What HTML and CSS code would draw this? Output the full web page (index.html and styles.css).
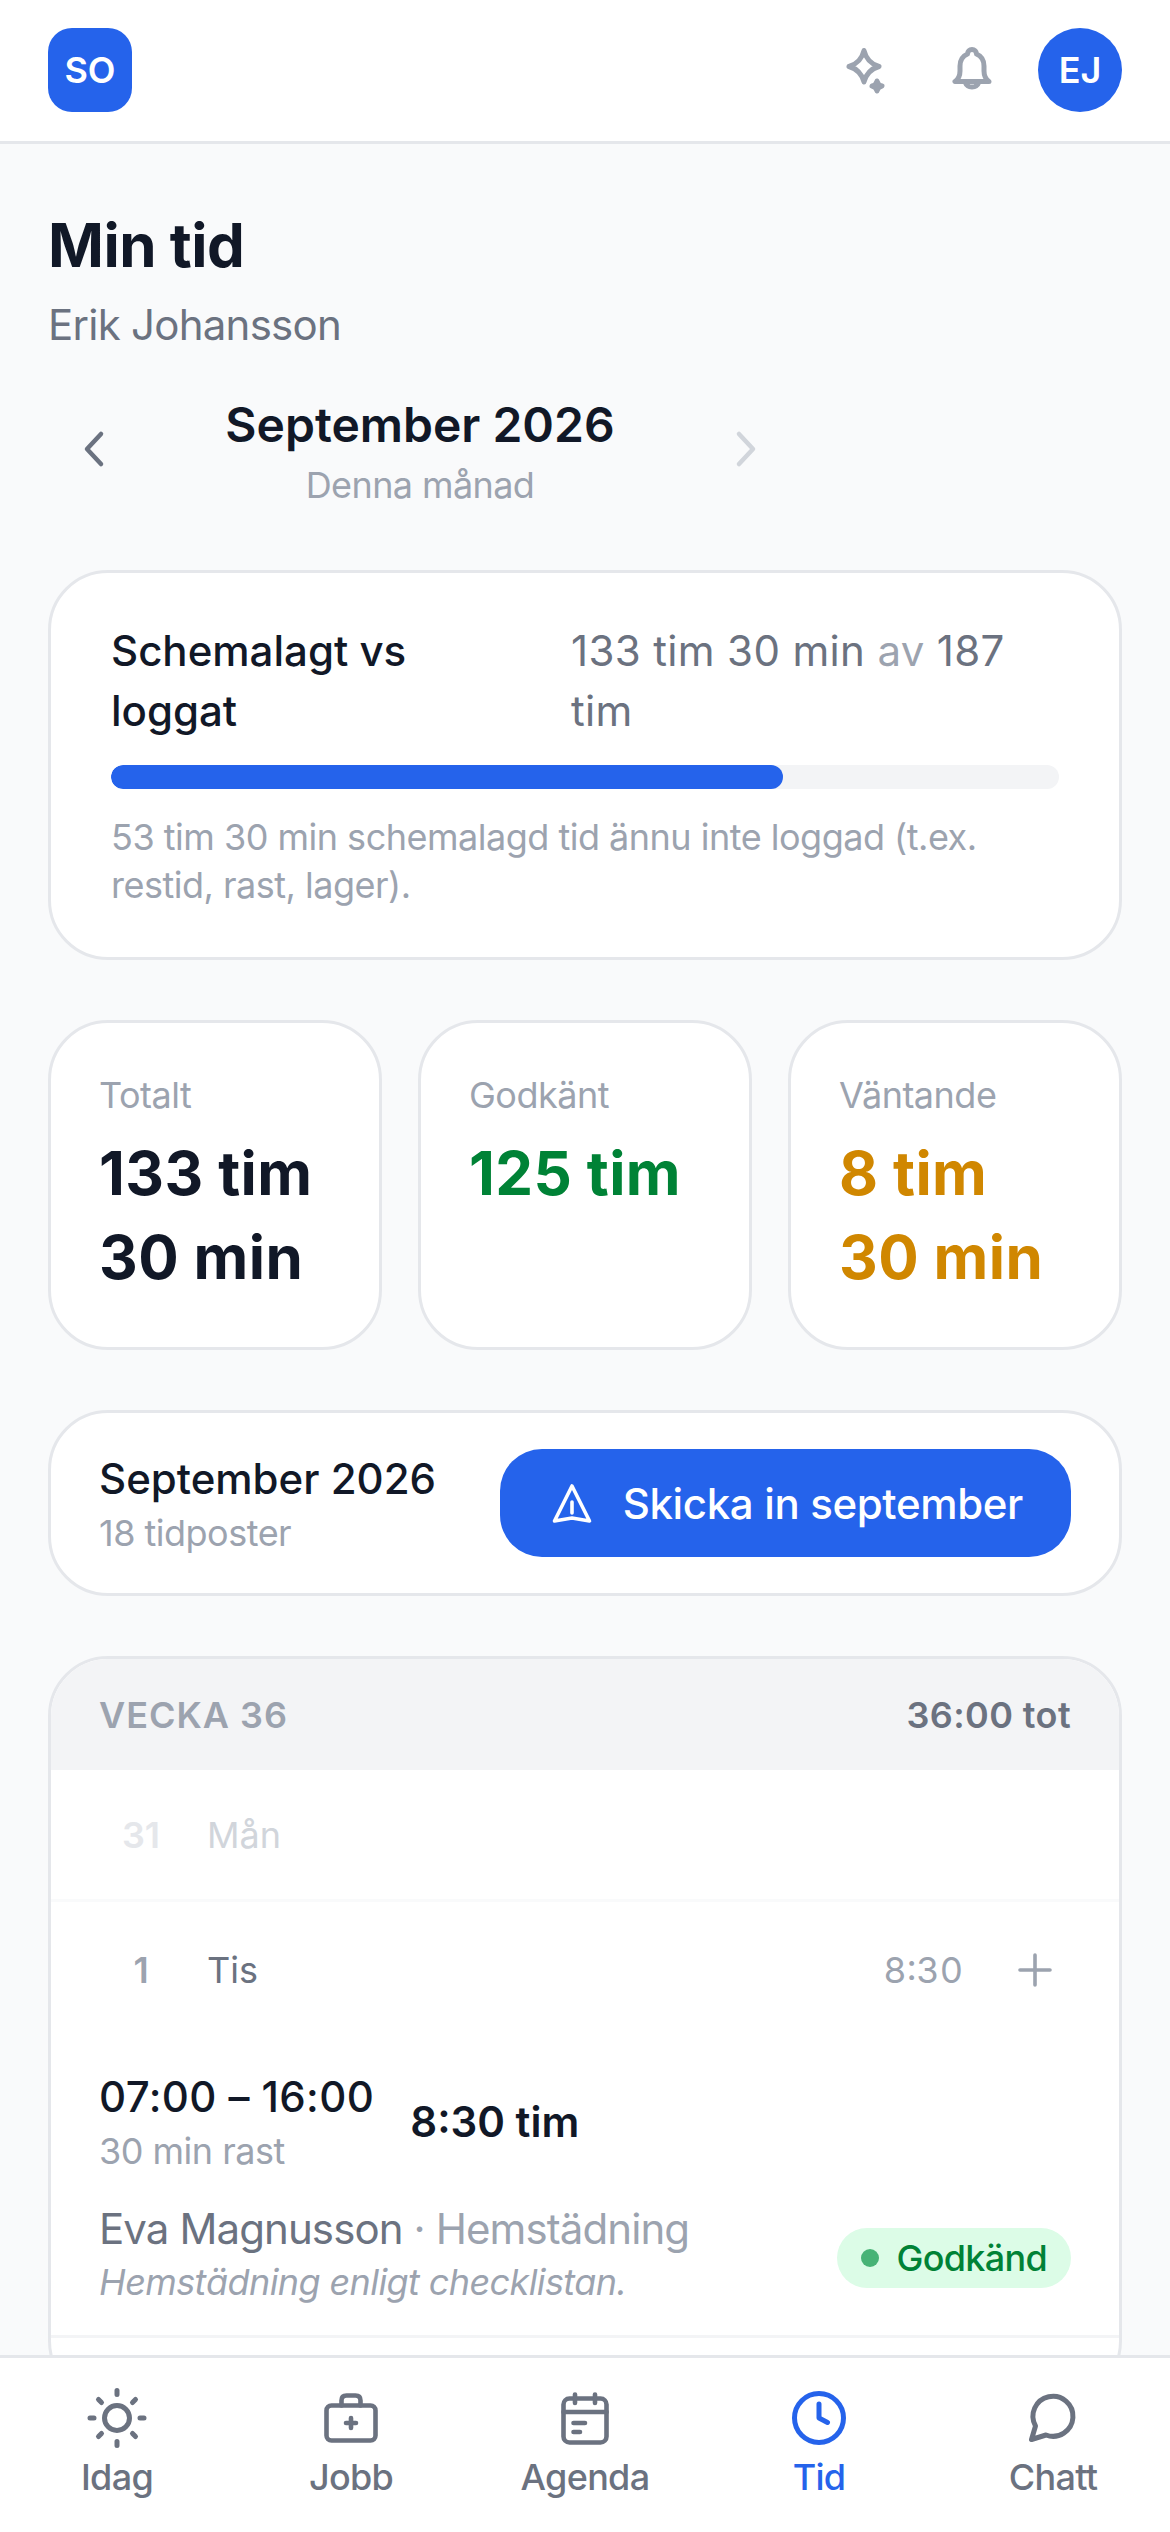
FILE: index.html
```html
<!DOCTYPE html>
<html lang="sv">
<head>
    <meta charset="UTF-8">
    <meta name="viewport" content="width=device-width, initial-scale=1.0">
    <title>Min tid</title>
    <link rel="stylesheet" href="styles.css">
</head>
<body>
    <header class="topbar">
        <div class="logo">SO</div>
        <div class="topbar-actions">
            <button class="icon-btn sparkle-btn" aria-label="AI">
                <svg viewBox="0 0 60 60" width="60" height="60" fill="none" stroke="#9ca3af" stroke-width="5" stroke-linejoin="round" stroke-linecap="round">
                    <path d="M24 10.5 Q27 23 39 26.5 Q27 30 24 42 Q21 30 9 26.5 Q21 23 24 10.5 Z"/>
                    <path d="M37 41 Q38 45 42 46 Q38 47 37 51 Q36 47 32 46 Q36 45 37 41 Z" fill="#9ca3af"/>
                </svg>
            </button>
            <button class="icon-btn" aria-label="Notiser">
                <svg viewBox="0 0 60 60" width="60" height="60" fill="none" stroke="#9ca3af" stroke-width="5" stroke-linejoin="round" stroke-linecap="round">
                    <path d="M13 41.5 H47 Q42 38 42 31 V26 C42 19 38 15.5 34.5 14 A4.5 4.5 0 0 0 25.5 14 C22 15.5 18 19 18 26 V31 Q18 38 13 41.5 Z"/>
                    <path d="M23 42 A7.5 7.8 0 0 0 37 42"/>
                </svg>
            </button>
            <div class="avatar">EJ</div>
        </div>
    </header>

    <main class="content">
        <h1>Min tid</h1>
        <p class="subtitle">Erik Johansson</p>

        <div class="month-nav">
            <button class="chevron-btn" aria-label="Föregående">
                <svg viewBox="0 0 48 48" width="48" height="48" fill="none" stroke="#6b7280" stroke-width="4.5" stroke-linecap="round" stroke-linejoin="round"><path d="M29 9 L15 24 L29 39"/></svg>
            </button>
            <div class="month-label">
                <div class="month-name">September 2026</div>
                <div class="month-hint">Denna månad</div>
            </div>
            <button class="chevron-btn" aria-label="Nästa">
                <svg viewBox="0 0 48 48" width="48" height="48" fill="none" stroke="#d1d5db" stroke-width="4.5" stroke-linecap="round" stroke-linejoin="round"><path d="M19 9 L33 24 L19 39"/></svg>
            </button>
        </div>

        <section class="card schedule-card">
            <div class="schedule-head">
                <div class="schedule-title">Schemalagt vs loggat</div>
                <div class="schedule-value">133 tim 30 min <span class="muted">av</span> 187<br>tim</div>
            </div>
            <div class="progress"><div class="progress-fill" style="width: 70.9%"></div></div>
            <p class="schedule-note">53 tim 30 min schemalagd tid ännu inte loggad (t.ex. restid, rast, lager).</p>
        </section>

        <section class="stats">
            <div class="card stat">
                <div class="stat-label">Totalt</div>
                <div class="stat-value">133 tim 30 min</div>
            </div>
            <div class="card stat">
                <div class="stat-label">Godkänt</div>
                <div class="stat-value green">125 tim</div>
            </div>
            <div class="card stat">
                <div class="stat-label">Väntande</div>
                <div class="stat-value amber">8 tim 30 min</div>
            </div>
        </section>

        <section class="card submit-card">
            <div>
                <div class="submit-title">September 2026</div>
                <div class="submit-sub">18 tidposter</div>
            </div>
            <button class="submit-btn">
                <svg viewBox="0 0 42 42" width="42" height="42" fill="none" stroke="#fff" stroke-width="3.6" stroke-linejoin="round" stroke-linecap="round">
                    <path d="M21 4 L38.5 39 L21 36 L3.5 39 Z"/>
                    <path d="M21 20 V31"/>
                </svg>
                Skicka in september
            </button>
        </section>

        <section class="week">
            <div class="week-head">
                <span class="week-name">VECKA 36</span>
                <span class="week-total">36:00 tot</span>
            </div>
            <div class="day day-off">
                <span class="day-num">31</span>
                <span class="day-name">Mån</span>
            </div>
            <div class="day">
                <span class="day-num">1</span>
                <span class="day-name">Tis</span>
                <span class="day-hours">8:30</span>
                <svg class="day-add" viewBox="0 0 36 36" width="36" height="36" fill="none" stroke="#9ca3af" stroke-width="3.6" stroke-linecap="round"><path d="M18 3 V33 M3 18 H33"/></svg>
            </div>
            <div class="entry">
                <div class="entry-times">
                    <div>
                        <div class="entry-range">07:00 – 16:00</div>
                        <div class="entry-break">30 min rast</div>
                    </div>
                    <div class="entry-total">8:30 tim</div>
                </div>
                <div class="entry-foot">
                    <div>
                        <div class="entry-who">Eva Magnusson <span class="muted">· Hemstädning</span></div>
                        <div class="entry-note">Hemstädning enligt checklistan.</div>
                    </div>
                    <span class="badge"><i class="badge-dot"></i>Godkänd</span>
                </div>
            </div>
            <div class="entry-next"></div>
        </section>
    </main>

    <nav class="tabbar">
        <a class="tab">
            <svg viewBox="0 0 66 66" width="66" height="66" fill="none" stroke="currentColor" stroke-width="5" stroke-linecap="round" stroke-linejoin="round">
                <circle cx="33" cy="33" r="12.5"/>
                <path d="M33 5.5 V9.5 M33 56.5 V60.5 M6 33 H10 M56 33 H60 M14.5 14.5 L17.5 17.5 M48.5 48.5 L51.5 51.5 M14.5 51.5 L17.5 48.5 M48.5 17.5 L51.5 14.5"/>
            </svg>
            <span>Idag</span>
        </a>
        <a class="tab">
            <svg viewBox="0 0 66 66" width="66" height="66" fill="none" stroke="currentColor" stroke-width="4.6" stroke-linecap="round" stroke-linejoin="round">
                <rect x="8.5" y="20.5" width="49" height="35" rx="5"/>
                <path d="M23.5 20.5 V15.5 Q23.5 10.5 28.5 10.5 H37.5 Q42.5 10.5 42.5 15.5 V20.5"/>
                <path d="M33 33 V43 M28 38 H38"/>
            </svg>
            <span>Jobb</span>
        </a>
        <a class="tab">
            <svg viewBox="0 0 66 66" width="66" height="66" fill="none" stroke="currentColor" stroke-width="4.6" stroke-linecap="round" stroke-linejoin="round">
                <rect x="11.5" y="13.5" width="43" height="44" rx="6"/>
                <path d="M23 9.5 V18 M43 9.5 V18 M11.5 27 H54.5 M21.5 38 H33 M21.5 47 H28"/>
            </svg>
            <span>Agenda</span>
        </a>
        <a class="tab active">
            <svg viewBox="0 0 66 66" width="66" height="66" fill="none" stroke="currentColor" stroke-width="5" stroke-linecap="round" stroke-linejoin="round">
                <circle cx="33" cy="33" r="24.5"/>
                <path d="M33 19 V33 L41.5 37.5"/>
            </svg>
            <span>Tid</span>
        </a>
        <a class="tab">
            <svg viewBox="0 0 66 66" width="66" height="66" fill="none" stroke="currentColor" stroke-width="5" stroke-linecap="round" stroke-linejoin="round">
                <path d="M26 50 A20 20 0 1 0 15.5 41 L11.5 54.5 Z"/>
            </svg>
            <span>Chatt</span>
        </a>
    </nav>
</body>
</html>
```

FILE: styles.css
```css
* {
    box-sizing: border-box;
}

html, body {
    margin: 0;
    height: 100%;
}

body {
    display: flex;
    flex-direction: column;
    height: 2532px;
    overflow: hidden;
    font-family: "Inter", "Liberation Sans", sans-serif;
    background: #f9fafb;
    color: #111827;
}

h1, p {
    margin: 0;
}

button {
    font-family: inherit;
    border: 0;
    background: none;
    padding: 0;
}

.muted {
    color: #9ca3af;
}

/* top bar */
.topbar {
    flex: none;
    display: flex;
    justify-content: space-between;
    align-items: center;
    height: 144px;
    padding: 0 48px 1px;
    background: #fff;
    border-bottom: 3px solid #e5e7eb;
}

.logo {
    display: flex;
    align-items: center;
    justify-content: center;
    width: 84px;
    height: 84px;
    border-radius: 24px;
    background: #2563eb;
    color: #fff;
    font-size: 36px;
    font-weight: 600;
}

.topbar-actions {
    display: flex;
    align-items: center;
    gap: 36px;
}

.icon-btn {
    display: flex;
    width: 60px;
    height: 60px;
}

.sparkle-btn {
    margin-right: 6px;
}

.avatar {
    display: flex;
    align-items: center;
    justify-content: center;
    width: 84px;
    height: 84px;
    border-radius: 50%;
    background: #2563eb;
    color: #fff;
    font-size: 36px;
    font-weight: 600;
}

/* page */
.content {
    flex: 1;
    min-height: 0;
    overflow: hidden;
    padding: 59px 48px 0;
}

h1 {
    font-size: 60px;
    line-height: 84px;
    font-weight: 700;
    letter-spacing: -.5px;
}

.subtitle {
    margin-top: 8px;
    font-size: 42px;
    line-height: 60px;
    letter-spacing: -.75px;
    color: #6b7280;
}

.month-nav {
    display: flex;
    align-items: center;
    margin-top: 34px;
    width: 744px;
}

.chevron-btn {
    display: flex;
    flex: none;
    margin: 0 24px;
}

.month-label {
    flex: 1;
    text-align: center;
}

.month-name {
    font-size: 48px;
    line-height: 72px;
    font-weight: 600;
}

.month-hint {
    font-size: 36px;
    line-height: 48px;
    letter-spacing: -.6px;
    color: #9ca3af;
}

.card {
    background: #fff;
    border: 3px solid #e5e7eb;
    border-radius: 60px;
}

/* schedule */
.schedule-card {
    margin-top: 61px;
    padding: 48px 60px 48px;
}

.schedule-head {
    display: grid;
    grid-template-columns: 460px 1fr;
    font-size: 42px;
    line-height: 60px;
}

.schedule-title {
    width: 320px;
    font-weight: 500;
}

.schedule-value {
    color: #6b7280;
    letter-spacing: .35px;
}

.progress {
    margin-top: 24px;
    height: 24px;
    border-radius: 12px;
    background: #f3f4f6;
    overflow: hidden;
}

.progress-fill {
    height: 100%;
    border-radius: 12px;
    background: #2563eb;
}

.schedule-note {
    margin-top: 24px;
    font-size: 36px;
    line-height: 48px;
    letter-spacing: -.5px;
    color: #9ca3af;
}

/* stats */
.stats {
    display: grid;
    grid-template-columns: repeat(3, 1fr);
    gap: 36px;
    margin-top: 60px;
}

.stat {
    padding: 48px 48px;
    border-radius: 60px;
}

.stat-label {
    font-size: 36px;
    line-height: 48px;
    letter-spacing: -.5px;
    color: #9ca3af;
}

.stat-value {
    margin-top: 12px;
    font-size: 60px;
    line-height: 84px;
    font-weight: 700;
    letter-spacing: .4px;
}

.green {
    color: #008236;
}

.amber {
    color: #d08700;
}

/* submit */
.submit-card {
    display: flex;
    align-items: center;
    justify-content: space-between;
    margin-top: 60px;
    padding: 36px 48px;
}

.submit-title {
    font-size: 42px;
    line-height: 60px;
    font-weight: 500;
}

.submit-sub {
    font-size: 36px;
    line-height: 48px;
    letter-spacing: -.5px;
    color: #9ca3af;
}

.submit-btn {
    display: flex;
    align-items: center;
    gap: 30px;
    height: 108px;
    padding: 0 48px 0 51px;
    border-radius: 42px;
    background: #2563eb;
    color: #fff;
    font-size: 42px;
    font-weight: 500;
    letter-spacing: -.35px;
}

/* week list */
.week {
    margin-top: 60px;
    background: #fff;
    border: 3px solid #e5e7eb;
    border-radius: 60px;
    overflow: hidden;
}

.week-head {
    display: flex;
    align-items: center;
    justify-content: space-between;
    height: 111px;
    padding: 0 48px;
    background: #f3f4f6;
    font-size: 36px;
    font-weight: 600;
}

.week-name {
    color: #9ca3af;
    letter-spacing: 1px;
}

.week-total {
    color: #6b7280;
    letter-spacing: .4px;
}

.day {
    display: flex;
    align-items: center;
    height: 132px;
    padding: 0 48px;
    font-size: 36px;
    color: #6b7280;
    border-bottom: 3px solid #f9fafb;
}

.day + .day {
    height: 135px;
    border-bottom: 0;
}

.day-off {
    color: #d1d5db;
}

.day-num {
    width: 84px;
    margin-right: 24px;
    text-align: center;
    font-weight: 600;
    color: #9ca3af;
}

.day-off .day-num {
    color: #e5e7eb;
}

.day-hours {
    margin-left: auto;
    color: #9ca3af;
    font-variant-numeric: tabular-nums;
}

.day-add {
    margin: 0 18px 0 54px;
}

.entry {
    padding: 30px 48px 30px;
    border-bottom: 3px solid #f3f4f6;
}

.entry-times {
    display: flex;
    align-items: center;
    gap: 36px;
}

.entry-range {
    font-size: 42px;
    line-height: 60px;
    font-weight: 500;
    letter-spacing: .4px;
}

.entry-break {
    font-size: 36px;
    line-height: 48px;
    letter-spacing: -.5px;
    color: #9ca3af;
}

.entry-total {
    font-size: 42px;
    font-weight: 600;
}

.entry-foot {
    display: flex;
    align-items: center;
    justify-content: space-between;
    margin-top: 24px;
}

.entry-who {
    font-size: 42px;
    line-height: 60px;
    letter-spacing: -.9px;
    color: #6b7280;
}

.entry-note {
    font-size: 36px;
    line-height: 46px;
    letter-spacing: -.6px;
    font-style: italic;
    color: #9ca3af;
}

.entry-next {
    height: 60px;
}

.badge {
    display: flex;
    align-items: center;
    gap: 18px;
    height: 60px;
    margin-top: 12px;
    padding: 0 24px;
    border-radius: 30px;
    background: #dcfce7;
    color: #008236;
    font-size: 36px;
    font-weight: 500;
    letter-spacing: -.7px;
}

.badge-dot {
    width: 18px;
    height: 18px;
    border-radius: 50%;
    background: #22a05a;
    opacity: .8;
}

/* bottom tabs */
.tabbar {
    flex: none;
    display: grid;
    grid-template-columns: repeat(5, 1fr);
    height: 177px;
    padding-top: 27px;
    background: #fff;
    border-top: 3px solid #e5e7eb;
}

.tab {
    display: flex;
    flex-direction: column;
    align-items: center;
    gap: 2px;
    font-size: 36px;
    line-height: 48px;
    font-weight: 500;
    letter-spacing: -.7px;
    color: #6b7280;
}

.tab.active {
    color: #2563eb;
}
```
